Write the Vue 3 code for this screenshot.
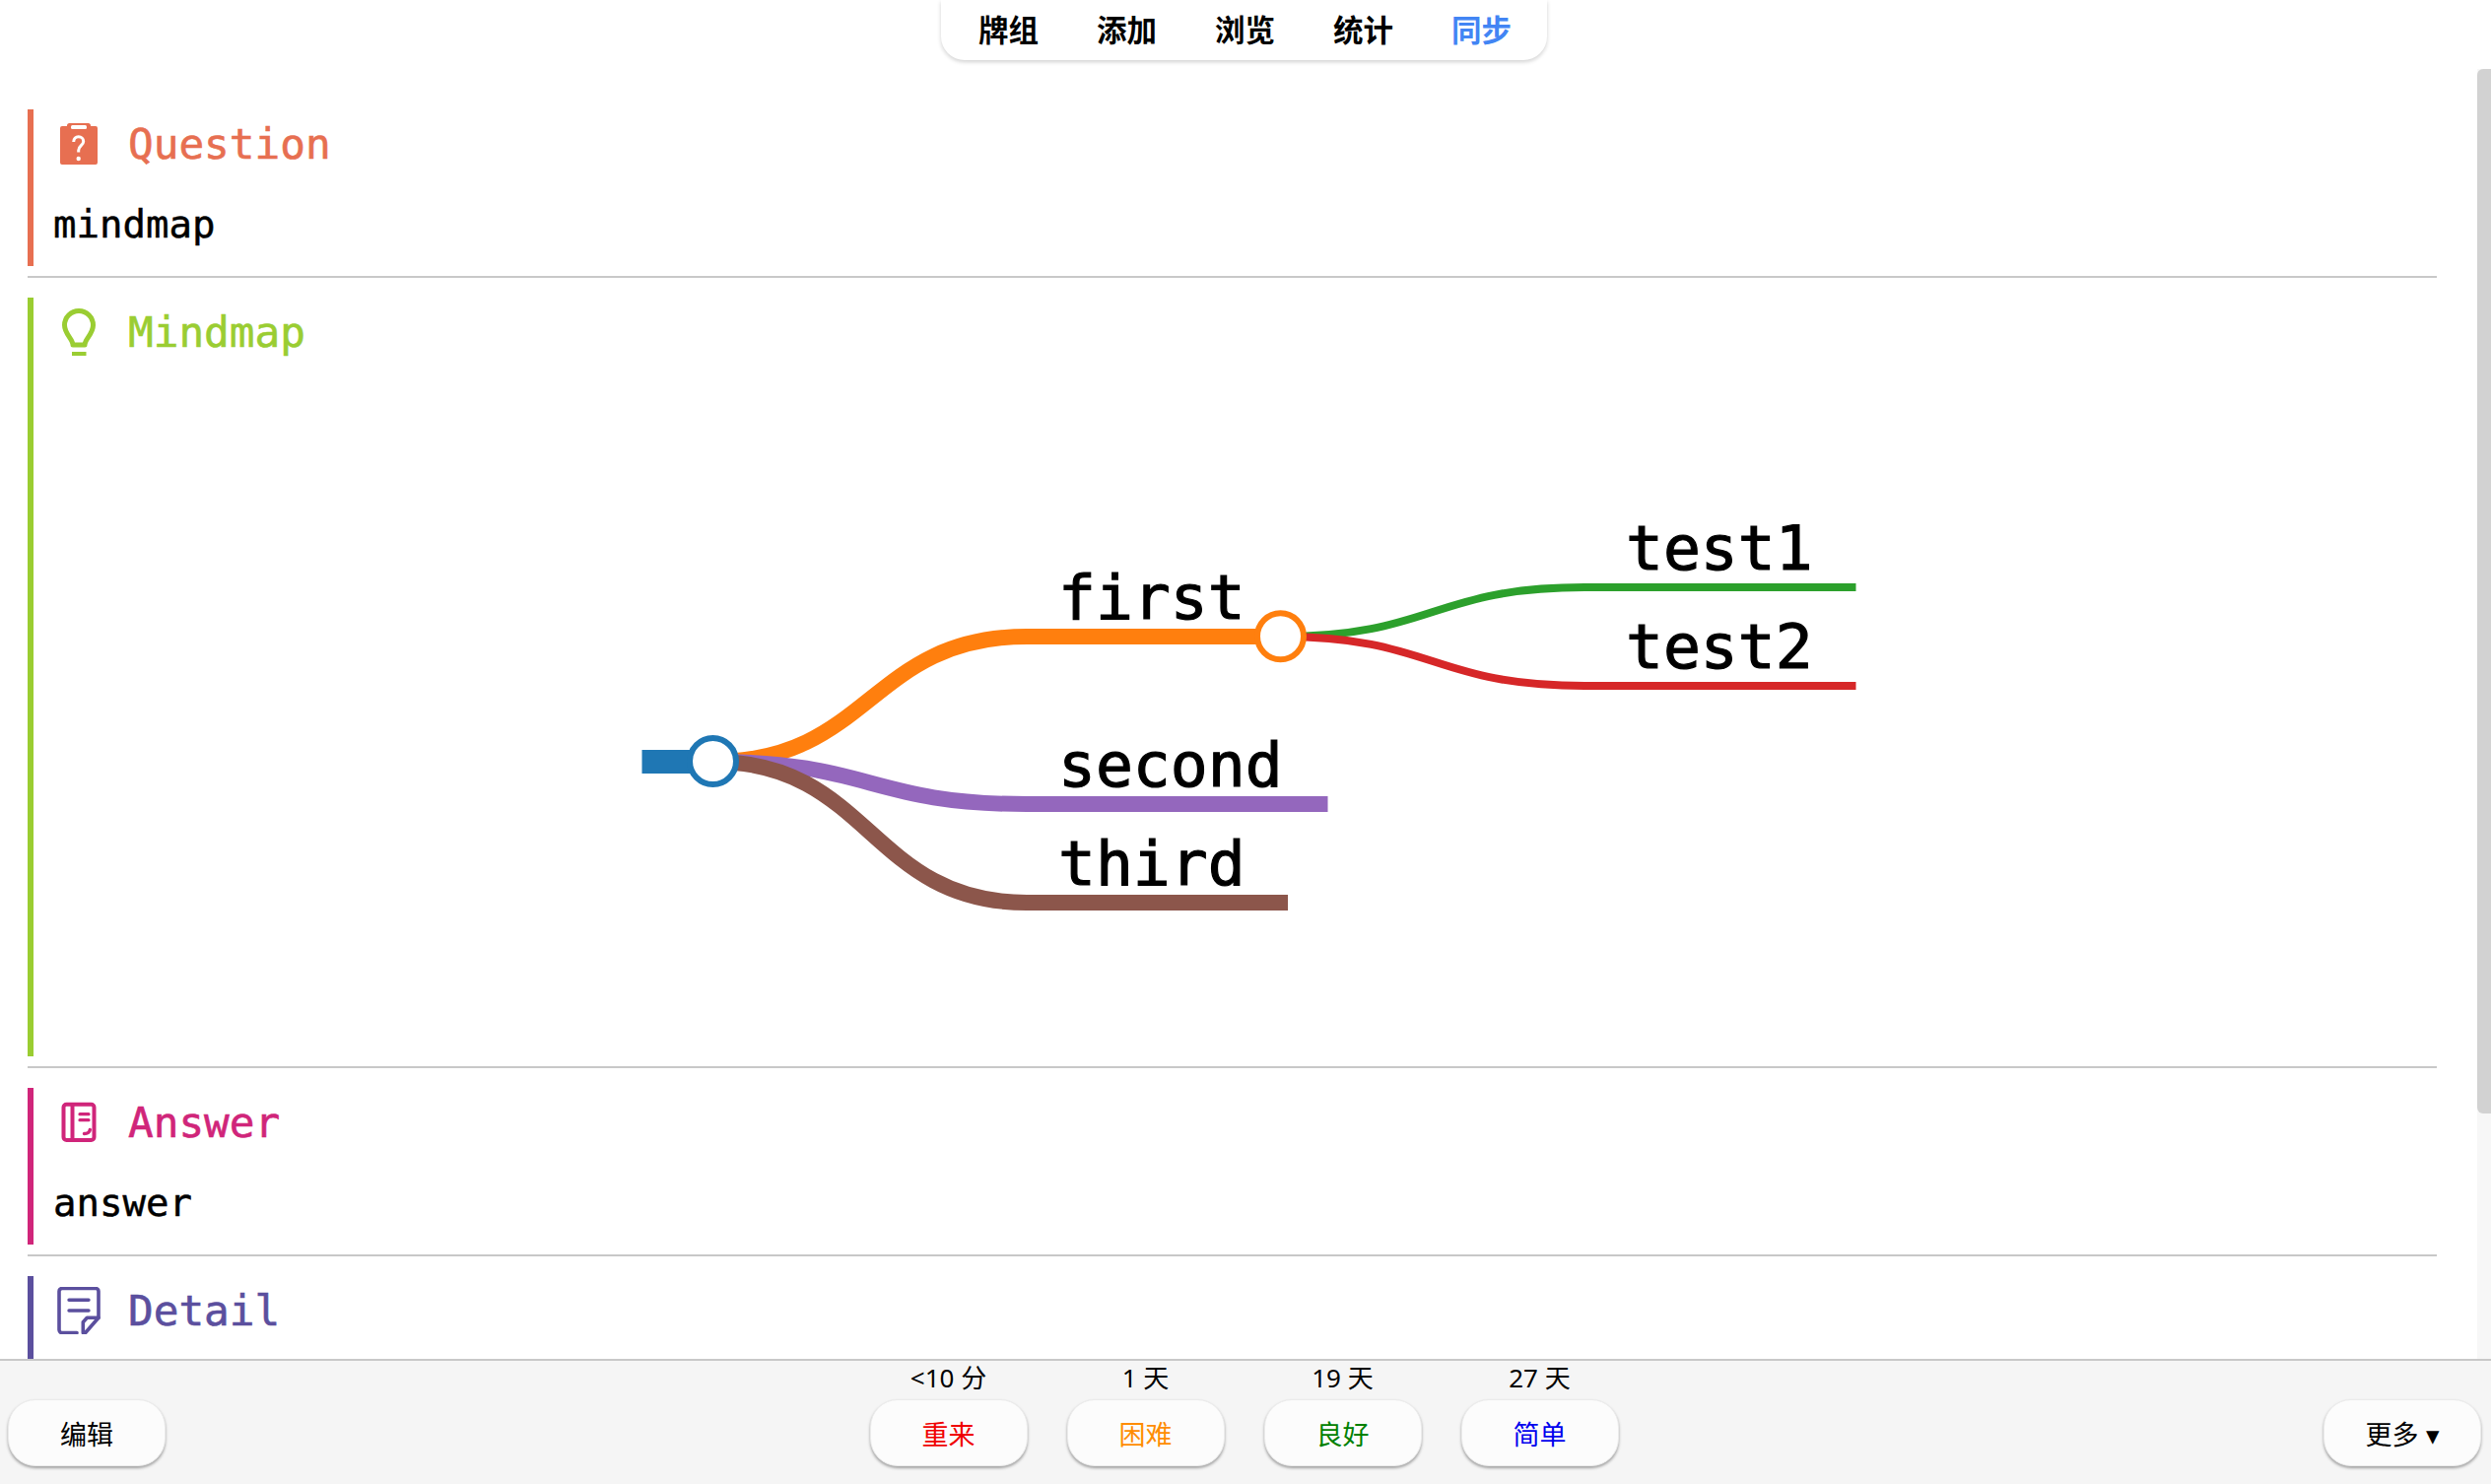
<template>
  <div class="page">
    <nav class="topbar">
      <a v-for="item in navItems" :key="item" class="nav-item" :class="{ sync: item === '同步' }">{{ item }}</a>
    </nav>

    <main class="card">
      <section class="block question">
        <div class="block-head">
          <svg class="block-icon" viewBox="0 0 48 48">
            <path d="M5 8a2 2 0 0 1 2-2h5V5.500A2.500 2.500 0 0 1 14.500 3h19A2.500 2.500 0 0 1 36 5.500V6h5a2 2 0 0 1 2 2v35a2 2 0 0 1-2 2H7a2 2 0 0 1-2-2z" fill="currentColor" />
            <rect x="16" y="5" width="16" height="4" rx="1.500" fill="#fff" />
            <path d="M18.700 22c0-3.300 2.300-5.300 5-5.300s5 2 5 4.800c0 4-5 4.500-5 9v2" fill="none" stroke="#fff" stroke-width="3" />
            <circle cx="23.700" cy="39" r="2.200" fill="#fff" />
          </svg>
          <span class="block-title">Question</span>
        </div>
        <div class="block-text">mindmap</div>
      </section>
      <hr class="divider" />

      <section class="block mindmap">
        <div class="block-head">
          <svg class="block-icon" viewBox="0 0 48 48">
            <path d="M18 37C18 31 9.500 26 9.500 17A14.500 14.500 0 0 1 38.500 17C38.500 26 30 31 30 37Z" fill="none" stroke="currentColor" stroke-width="5" stroke-linejoin="round" />
            <rect x="17" y="44" width="14.500" height="4" fill="currentColor" />
          </svg>
          <span class="block-title">Mindmap</span>
        </div>
        <svg class="map" width="2439" height="700" viewBox="34 372 2439 700">
          <path d="M651.500 773H724" fill="none" stroke="#1f77b4" stroke-width="24" />
          <path
            v-for="link in links"
            :key="link.label"
            :d="link.d"
            fill="none"
            :stroke="link.color"
            :stroke-width="link.width"
          />
          <text v-for="link in links" :key="link.label + '-text'" class="map-label" :x="link.textX" :y="link.textY">{{ link.label }}</text>
          <circle cx="723.500" cy="772.500" r="23.500" fill="#fff" stroke="#1f77b4" stroke-width="6" />
          <circle cx="1299.500" cy="645.800" r="23.500" fill="#fff" stroke="#ff7f0e" stroke-width="6" />
        </svg>
      </section>
      <hr class="divider" />

      <section class="block answer">
        <div class="block-head">
          <svg class="block-icon" viewBox="0 0 48 48">
            <rect x="8.500" y="5.700" width="31" height="36.300" rx="3" fill="none" stroke="currentColor" stroke-width="4" />
            <path d="M17.500 5.700V42" fill="none" stroke="currentColor" stroke-width="4" />
            <path d="M25 15.700h9M25 21.700h9" fill="none" stroke="currentColor" stroke-width="3.200" stroke-linecap="round" />
            <path d="M29.500 35.500c3 0 5.300-1.500 5.800-4" fill="none" stroke="currentColor" stroke-width="3.500" stroke-linecap="round" />
          </svg>
          <span class="block-title">Answer</span>
        </div>
        <div class="block-text">answer</div>
      </section>
      <hr class="divider" />

      <section class="block detail">
        <div class="block-head">
          <svg class="block-icon" viewBox="0 0 48 48">
            <path d="M22 46.500H7a3 3 0 0 1-3-3V4.500a3 3 0 0 1 3-3h34a3 3 0 0 1 3 3v27" fill="none" stroke="currentColor" stroke-width="3.600" stroke-linecap="round" />
            <path d="M14 13.300h20M14 24h20" fill="none" stroke="currentColor" stroke-width="3.400" stroke-linecap="round" />
            <path d="M28.300 46.500V35.700l4-4.400H44L30.700 46.500z" fill="none" stroke="currentColor" stroke-width="3.600" stroke-linejoin="round" />
          </svg>
          <span class="block-title">Detail</span>
        </div>
        <div class="block-text"></div>
      </section>

      <div class="scroll-track"><div class="scroll-thumb"></div></div>
    </main>

    <footer class="bottombar">
      <button class="btn">编辑</button>
      <div class="ease-row">
        <div v-for="ease in easeButtons" :key="ease.label" class="ease">
          <span class="ease-time">{{ ease.time }}</span>
          <button class="btn" :style="{ color: ease.color }">{{ ease.label }}</button>
        </div>
      </div>
      <button class="btn btn-more">更多 ▾</button>
    </footer>
  </div>
</template>

<script setup>
const navItems = ['牌组', '添加', '浏览', '统计', '同步']

// 脑图的连线和文字，坐标就是画布上的位置
const links = [
  { label: 'first', color: '#ff7f0e', width: 16, d: 'M724 773C883 773 883 646 1042 646H1300', textX: 1074, textY: 628 },
  { label: 'second', color: '#9467bd', width: 16, d: 'M724 773C883 773 883 816 1042 816H1347.500', textX: 1074, textY: 798 },
  { label: 'third', color: '#8c564b', width: 16, d: 'M724 773C883 773 883 916 1042 916H1307', textX: 1074, textY: 898 },
  { label: 'test1', color: '#2ca02c', width: 8, d: 'M1300 646C1454 646 1454 596 1608 596H1883.500', textX: 1650, textY: 578 },
  { label: 'test2', color: '#d62728', width: 8, d: 'M1300 646C1454 646 1454 696 1608 696H1883.500', textX: 1650, textY: 678 }
]

const easeButtons = [
  { time: '<10 分', label: '重来', color: '#f00000' },
  { time: '1 天', label: '困难', color: '#ff8c00' },
  { time: '19 天', label: '良好', color: '#008000' },
  { time: '27 天', label: '简单', color: '#0000ee' }
]
</script>

<style scoped>
.page {
  position: relative;
  display: flex;
  flex-direction: column;
  height: 1506px;
  overflow: hidden;
  background: #fff;
  font-family: "Noto Sans", "Noto Sans CJK SC", sans-serif;
}

.topbar {
  position: absolute;
  top: 0;
  left: 955px;
  z-index: 2;
  display: flex;
  gap: 59px;
  height: 61px;
  padding: 0 36px 0 38px;
  box-sizing: border-box;
  align-items: center;
  background: #fff;
  border-radius: 0 0 24px 24px;
  box-shadow: 0 2px 4px rgba(0, 0, 0, 0.18);
  font-size: 30.500px;
  font-weight: 700;
  color: #000;
}

.nav-item {
  line-height: 1;
}

.sync {
  color: #4285f4;
}

.card {
  position: relative;
  flex: 1;
  min-height: 0;
  overflow: hidden;
  padding: 111px 55px 0 28px;
}

.block {
  border-left: 6px solid currentColor;
}

.question { color: #e76f51; }
.mindmap { color: #9acd32; }
.answer { color: #d0257a; }
.detail { color: #5b4f9e; }

.block-head {
  display: flex;
  align-items: center;
  gap: 26px;
  height: 70px;
  padding-left: 22px;
}

.block-icon {
  width: 48px;
  height: 48px;
  flex: none;
}

.block-title {
  font-family: "DejaVu Sans Mono", monospace;
  font-size: 42.700px;
  line-height: 48px;
  -webkit-text-stroke: 0.6px currentColor;
}

.block-text {
  height: 78px;
  padding: 11px 0 0 20px;
  font-family: "DejaVu Sans Mono", monospace;
  font-size: 39px;
  line-height: 72px;
  color: #000;
  -webkit-text-stroke: 0.5px currentColor;
}

.map {
  display: block;
}

.map-label {
  font-family: "DejaVu Sans Mono", monospace;
  font-size: 63px;
  fill: #000;
  stroke: #000;
  stroke-width: 1.200px;
}

.divider {
  height: 2px;
  margin: 10px 0 20px;
  border: none;
  background: #c8c8c8;
}

.scroll-track {
  position: absolute;
  top: 70px;
  right: 0;
  bottom: 0;
  width: 14px;
  background: #f7f7f7;
}

.scroll-thumb {
  height: 1060px;
  background: #d2d2d2;
  border-radius: 6px 0 0 6px;
}

.bottombar {
  display: flex;
  flex: none;
  justify-content: space-between;
  align-items: flex-end;
  height: 127px;
  box-sizing: border-box;
  padding: 0 10px 18px 8px;
  border-top: 2px solid #c8c8c8;
  background: #f5f5f5;
}

.ease-row {
  display: flex;
  gap: 40px;
  margin-left: -1px;
}

.ease {
  display: flex;
  flex-direction: column;
  align-items: center;
  gap: 5px;
}

.ease-time {
  font-size: 26px;
  line-height: 34px;
  color: #000;
}

.btn {
  width: 160px;
  height: 68px;
  padding: 0;
  border: 1px solid #ebebeb;
  border-radius: 28px;
  background: #fcfcfc;
  box-shadow: 0 2px 3px rgba(0, 0, 0, 0.35);
  font-family: inherit;
  font-size: 27px;
  color: #000;
}
</style>

<style>
html, body {
  margin: 0;
  padding: 0;
  overflow: hidden;
}
</style>
